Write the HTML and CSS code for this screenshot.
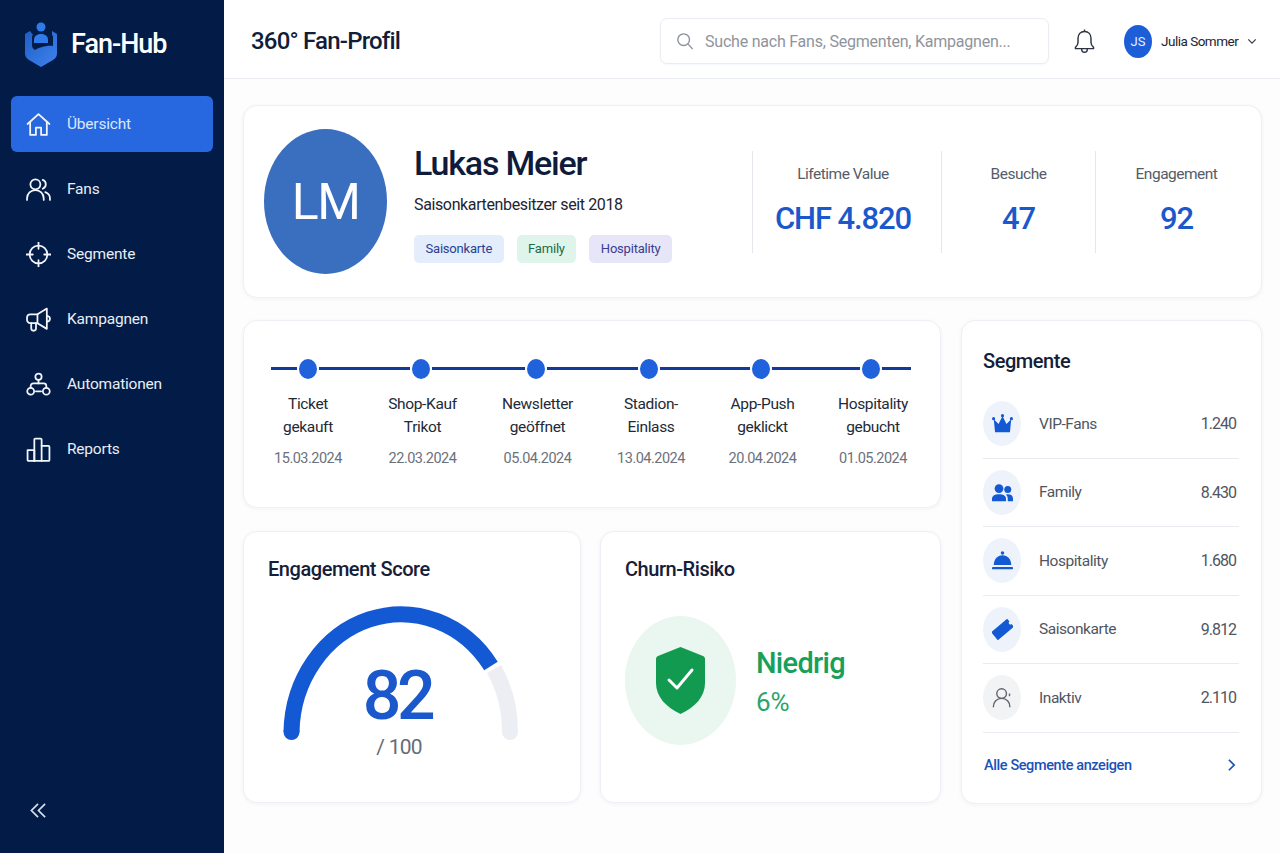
FILE: index.html
```html
<!DOCTYPE html>
<html lang="de">
<head>
  <meta charset="UTF-8" />
  <meta name="viewport" content="width=device-width, initial-scale=1.0"/>
  <title>Fan-Hub: 360° Fan-Profil</title>
  <link rel="stylesheet" href="styles.css">
</head>
<body>

<div class="app">

  <!-- Sidebar -->
  <aside class="sidebar">
    <div class="brand">
      <svg class="brand-logo" viewBox="0 0 34 46">
        <defs>
          <linearGradient id="shieldGrad" x1="0" y1="0" x2="1" y2="1">
            <stop offset="0" stop-color="#1f5fc4"/>
            <stop offset="1" stop-color="#3f83f0"/>
          </linearGradient>
        </defs>
        <path d="M6 9 1 12v19c0 3 1 5 4 7l12 7 12-7c3-2 4-4 4-7V12l-5-3v4l1 1v10c-6-1-15 2-18 4-2-1-3-3-3-5V14l1-1z" fill="url(#shieldGrad)"/>
        <circle cx="17" cy="5" r="4.500" fill="#2f7bea"/>
        <path d="M10 21v-3c0-3.500 2.500-6 7-6s7 2.500 7 6v3z" fill="#2f7bea"/>
      </svg>
      <span class="brand-name">Fan-Hub</span>
    </div>

    <nav class="nav">
      <a class="nav-item active">
        <svg class="nav-icon" viewBox="0 0 24 24"><path d="M1.500 11.500 12 2l10.500 9.500"/><path d="M4 9.500V22h5.500v-7h5v7H20V9.500"/></svg>
        Übersicht
      </a>
      <a class="nav-item">
        <svg class="nav-icon" viewBox="0 0 24 24"><circle cx="9" cy="7" r="4.800"/><path d="M1 22v-1.500a8 8 0 0 1 16 0V22"/><path d="M16 2.800a4.500 4.500 0 0 1 0 8.500"/><path d="M18.500 14.500c2.700 1 4.500 3.300 4.500 6V22"/></svg>
        Fans
      </a>
      <a class="nav-item">
        <svg class="nav-icon" viewBox="0 0 24 24"><circle cx="12" cy="12" r="8.500"/><path d="M12 0v6.500M12 17.500V24M0 12h6.500M17.500 12H24"/></svg>
        Segmente
      </a>
      <a class="nav-item">
        <svg class="nav-icon" viewBox="0 0 24 24"><path d="M20 1.500 11 7H4a3 3 0 0 0-3 3v2.500a3 3 0 0 0 3 3h7l9 5.500z"/><path d="M11 7v8.500"/><path d="M5 15.500v5a2.300 2.300 0 0 0 4.600 0v-5"/><path d="M20 8.500c2 .2 3 1.300 3 2.800s-1 2.700-3 2.800"/></svg>
        Kampagnen
      </a>
      <a class="nav-item">
        <svg class="nav-icon" viewBox="0 0 24 24"><circle cx="12" cy="4.500" r="3"/><path d="M12 7.500V11"/><path d="M4.500 15v-1.500a2.500 2.500 0 0 1 2.500-2.500h10a2.500 2.500 0 0 1 2.500 2.500V15"/><circle cx="4.500" cy="18.500" r="3.300"/><circle cx="19.500" cy="18.500" r="3.300"/><path d="M9.500 18.500h5"/></svg>
        Automationen
      </a>
      <a class="nav-item">
        <svg class="nav-icon" viewBox="0 0 24 24"><path d="M1.500 12.500h6.500V23H2.500a1 1 0 0 1-1-1z"/><path d="M8 23V2.500a1 1 0 0 1 1-1h5a1 1 0 0 1 1 1V23"/><path d="M15 8.500h6.500a1 1 0 0 1 1 1V22a1 1 0 0 1-1 1H8"/></svg>
        Reports
      </a>
    </nav>

    <div class="collapse">
      <svg viewBox="0 0 18 18"><path d="M8.500 2 1.500 9l7 7M16 2 9 9l7 7"/></svg>
    </div>
  </aside>

  <div class="main">

    <!-- Kopfzeile -->
    <header class="topbar">
      <div class="page-title">360° Fan-Profil</div>
      <div class="search">
        <svg class="search-icon" viewBox="0 0 20 20"><circle cx="8.500" cy="8.500" r="6.500"/><path d="m13.500 13.500 5 5.500"/></svg>
        <span class="search-text">Suche nach Fans, Segmenten, Kampagnen...</span>
      </div>
      <svg class="bell" viewBox="0 0 22 26"><path d="M11 3c-4.300 0-6.800 3-6.800 7.200v4.300c0 2.200-1 3.600-2.700 5.200v1.300h19v-1.300c-1.700-1.600-2.700-3-2.700-5.200v-4.300C17.800 6 15.300 3 11 3z"/><path d="M11 1v2M8 21c0 2.500 1.300 3.800 3 3.800s3-1.300 3-3.800"/></svg>
      <div class="user">
        <div class="user-avatar">JS</div>
        <span class="user-name">Julia Sommer</span>
        <svg class="user-caret" viewBox="0 0 12 8"><path d="m1.500 1.500 4.500 4.500 4.500-4.500"/></svg>
      </div>
    </header>

    <div class="content">

      <!-- Profilkarte -->
      <section class="card profile">
        <div class="profile-avatar">LM</div>
        <div class="profile-info">
          <h1 class="profile-name">Lukas Meier</h1>
          <p class="profile-since">Saisonkartenbesitzer seit 2018</p>
          <div class="tags">
            <span class="tag tag-blue">Saisonkarte</span>
            <span class="tag tag-green">Family</span>
            <span class="tag tag-purple">Hospitality</span>
          </div>
        </div>
        <div class="stats">
          <div class="stat">
            <div class="stat-label">Lifetime Value</div>
            <div class="stat-value">CHF 4.820</div>
          </div>
          <div class="stat">
            <div class="stat-label">Besuche</div>
            <div class="stat-value">47</div>
          </div>
          <div class="stat">
            <div class="stat-label">Engagement</div>
            <div class="stat-value">92</div>
          </div>
        </div>
      </section>

      <div class="columns">
        <div class="left-col">

          <!-- Timeline -->
          <section class="card timeline">
            <div class="step">
              <span class="dot"></span>
              <div class="step-title">Ticket<br>gekauft</div>
              <div class="step-date">15.03.2024</div>
            </div>
            <div class="step">
              <span class="dot"></span>
              <div class="step-title">Shop-Kauf<br>Trikot</div>
              <div class="step-date">22.03.2024</div>
            </div>
            <div class="step">
              <span class="dot"></span>
              <div class="step-title">Newsletter<br>geöffnet</div>
              <div class="step-date">05.04.2024</div>
            </div>
            <div class="step">
              <span class="dot"></span>
              <div class="step-title">Stadion-<br>Einlass</div>
              <div class="step-date">13.04.2024</div>
            </div>
            <div class="step">
              <span class="dot"></span>
              <div class="step-title">App-Push<br>geklickt</div>
              <div class="step-date">20.04.2024</div>
            </div>
            <div class="step">
              <span class="dot"></span>
              <div class="step-title">Hospitality<br>gebucht</div>
              <div class="step-date">01.05.2024</div>
            </div>
          </section>

          <div class="bottom-row">
            <section class="card score">
              <h2 class="card-title">Engagement Score</h2>
              <div class="gauge">
                <svg class="gauge-arc" viewBox="0 0 236 136">
                  <path class="arc-rest" d="M211 65 A109.500 120 0 0 1 227 128"/>
                  <circle class="arc-rest-cap" cx="227" cy="128" r="8"/>
                  <path class="arc-fill" d="M8.500 128 A109.500 120 0 0 1 208 62"/>
                  <circle class="arc-fill-cap" cx="8.500" cy="128" r="8"/>
                </svg>
                <div class="gauge-value">82</div>
                <div class="gauge-max">/ 100</div>
              </div>
            </section>

            <section class="card churn">
              <h2 class="card-title">Churn-Risiko</h2>
              <div class="churn-body">
                <div class="churn-badge">
                  <svg viewBox="0 0 49 67"><path class="shield" d="M24.500 0 47 9c1.200.5 2 1.500 2 3v24c0 14-10 24-24.500 31C10 60 0 50 0 36V12c0-1.500.8-2.500 2-3z"/><path class="shield-check" d="m13 33 8 8 15-18"/></svg>
                </div>
                <div>
                  <div class="churn-level">Niedrig</div>
                  <div class="churn-pct">6%</div>
                </div>
              </div>
            </section>
          </div>
        </div>

        <!-- Segmente -->
        <section class="card segments">
          <h2 class="card-title">Segmente</h2>
          <div class="segment">
            <div class="segment-icon">
              <svg viewBox="0 0 24 24"><circle cx="12" cy="3" r="1.800"/><circle cx="1.800" cy="6.500" r="1.800"/><circle cx="22.200" cy="6.500" r="1.800"/><path d="M2 7 7.500 12.500 12 3.500 16.500 12.500 22 7 20.500 22H3.500z"/></svg>
            </div>
            <span class="segment-name">VIP-Fans</span>
            <span class="segment-count">1.240</span>
          </div>
          <div class="segment">
            <div class="segment-icon">
              <svg viewBox="0 0 24 24"><circle cx="8" cy="7.500" r="5"/><circle cx="18" cy="8.500" r="4"/><path d="M0 22v-2.500C0 15.500 3.500 14 8 14s8 1.500 8 5.500V22z"/><path d="M18 22v-3c0-2-.8-3.500-2-4.800.7-.1 1.500-.2 2.200-.2 3.500 0 5.800 1.500 5.800 5v3z"/></svg>
            </div>
            <span class="segment-name">Family</span>
            <span class="segment-count">8.430</span>
          </div>
          <div class="segment">
            <div class="segment-icon">
              <svg viewBox="0 0 24 24"><circle cx="12" cy="3.500" r="2"/><path d="M2 17c0-6 4-11 10-11s10 5 10 11z"/><rect x="0" y="19.500" width="24" height="2.500" rx="1"/></svg>
            </div>
            <span class="segment-name">Hospitality</span>
            <span class="segment-count">1.680</span>
          </div>
          <div class="segment">
            <div class="segment-icon">
              <svg viewBox="0 0 24 24"><path transform="rotate(-40 12 12)" d="M0 6h24v4a2 2 0 0 0 0 4v4H0z"/></svg>
            </div>
            <span class="segment-name">Saisonkarte</span>
            <span class="segment-count">9.812</span>
          </div>
          <div class="segment">
            <div class="segment-icon inactive">
              <svg viewBox="0 0 24 24"><circle cx="11" cy="7.500" r="5.500"/><path d="M1.500 23c0-6 4-10 9.500-10s9.500 4 9.500 10"/><path d="M20 7.500v3"/></svg>
            </div>
            <span class="segment-name">Inaktiv</span>
            <span class="segment-count">2.110</span>
          </div>
          <a class="segments-link">
            Alle Segmente anzeigen
            <svg viewBox="0 0 10 16"><path d="m2 2 6 6-6 6"/></svg>
          </a>
        </section>
      </div>
    </div>
  </div>
</div>

</body>
</html>
```

FILE: styles.css
```css
* {
  box-sizing: border-box;
}
body {
  margin: 0;
  font-family: 'Roboto', 'Liberation Sans', sans-serif;
  background: #fdfdfe;
  color: #111d3a;
}
h1, h2, p {
  margin: 0;
}
.app {
  display: flex;
  width: 1280px;
  height: 853px;
  overflow: hidden;
}

/* sidebar */
.sidebar {
  display: flex;
  flex-direction: column;
  flex: none;
  width: 224px;
  padding: 22px 11px 34px;
  background: #021c47;
  color: #fff;
}
.brand {
  display: flex;
  align-items: center;
  gap: 13px;
  height: 45px;
  padding-left: 13px;
}
.brand-logo {
  width: 34px;
  height: 46px;
}
.brand-name {
  margin-bottom: 2px;
  font-size: 27px;
  font-weight: 500;
  letter-spacing: -1px;
}
.nav {
  display: flex;
  flex-direction: column;
  gap: 9px;
  margin-top: 29px;
  width: 202px;
}
.nav-item {
  display: flex;
  align-items: center;
  gap: 16px;
  height: 56px;
  padding-left: 15px;
  border-radius: 6px;
  font-size: 15.500px;
  letter-spacing: -0.2px;
  color: #e9edf4;
}
.nav-item.active {
  background: #2767e0;
  color: #dbe7fd;
}
.nav-icon {
  width: 25px;
  height: 25px;
  fill: none;
  stroke: #f2f5fa;
  stroke-width: 1.700;
  stroke-linecap: round;
  stroke-linejoin: round;
}
.collapse {
  margin-top: auto;
  padding-left: 19px;
  line-height: 0;
}
.collapse svg {
  width: 17px;
  height: 17px;
  fill: none;
  stroke: #d9dfe9;
  stroke-width: 1.800;
}

/* kopfzeile */
.main {
  flex: 1;
  min-width: 0;
}
.topbar {
  display: flex;
  align-items: center;
  height: 79px;
  padding: 4px 0 0 27px;
  border-bottom: 1px solid #e9ecf1;
  background: #fff;
}
.page-title {
  width: 409px;
  font-size: 24px;
  font-weight: 500;
  letter-spacing: -0.8px;
}
.search {
  display: flex;
  align-items: center;
  gap: 11px;
  flex: none;
  width: 389px;
  height: 46px;
  padding-left: 15px;
  border: 1px solid #e9ecf1;
  border-radius: 7px;
  box-shadow: 0 1px 2px rgba(20, 40, 80, 0.04);
}
.search-icon {
  width: 18px;
  height: 20px;
  fill: none;
  stroke: #8b9099;
  stroke-width: 1.500;
}
.search-text {
  font-size: 16px;
  letter-spacing: -0.22px;
  color: #8f949c;
}
.bell {
  flex: none;
  width: 21px;
  height: 26px;
  margin-left: 25px;
  fill: none;
  stroke: #2d3340;
  stroke-width: 1.500;
  stroke-linejoin: round;
}
.user {
  display: flex;
  align-items: center;
  margin-left: 29px;
}
.user-avatar {
  display: flex;
  align-items: center;
  justify-content: center;
  flex: none;
  width: 28px;
  height: 33px;
  border-radius: 50%;
  background: #1c5ed8;
  color: #e8effc;
  font-size: 13px;
}
.user-name {
  margin-left: 9px;
  font-size: 13.500px;
  letter-spacing: -0.5px;
  white-space: nowrap;
  color: #1d2433;
}
.user-caret {
  flex: none;
  width: 10px;
  height: 7px;
  margin-left: 9px;
  fill: none;
  stroke: #39404d;
  stroke-width: 1.500;
}

/* karten */
.content {
  padding: 26px 18px 0 19px;
}
.card {
  background: #fff;
  border: 1px solid #edf0f4;
  border-radius: 14px;
  box-shadow: 0 1px 4px rgba(20, 40, 80, 0.05);
}
.card-title {
  font-size: 20px;
  font-weight: 500;
  letter-spacing: -0.45px;
  color: #152038;
}

/* profil */
.profile {
  display: flex;
  align-items: center;
  height: 193px;
  padding-left: 20px;
}
.profile-avatar {
  display: flex;
  align-items: center;
  justify-content: center;
  flex: none;
  width: 123px;
  height: 145px;
  border-radius: 50%;
  background: #3a6ebf;
  color: #fff;
  font-size: 50px;
  letter-spacing: -1.500px;
}
.profile-info {
  margin-left: 27px;
}
.profile-name {
  margin-top: 3px;
  font-size: 34px;
  font-weight: 500;
  line-height: 40px;
  letter-spacing: -1.200px;
  color: #0f1b3a;
}
.profile-since {
  margin-top: 12px;
  font-size: 16px;
  letter-spacing: -0.37px;
  color: #1d2433;
}
.tags {
  display: flex;
  gap: 13px;
  margin-top: 21px;
}
.tag {
  padding: 0 11.500px;
  height: 28px;
  line-height: 28px;
  border-radius: 5px;
  font-size: 13px;
  letter-spacing: -0.2px;
}
.tag-blue {
  background: #e3edfb;
  color: #2b3f8f;
}
.tag-green {
  background: #dff4ea;
  color: #1f6b47;
}
.tag-purple {
  background: #e7e6f8;
  color: #38408f;
}
.stats {
  display: grid;
  grid-template-columns: 189px 154px 162px;
  margin-left: auto;
  margin-right: 4px;
}
.stat {
  height: 102px;
  padding-top: 14px;
  border-left: 1px solid #e4e7ec;
  text-align: center;
}
.stat:first-child {
  padding-right: 8px;
}
.stat-label {
  font-size: 15.500px;
  letter-spacing: -0.5px;
  color: #555c68;
}
.stat-value {
  margin-top: 17px;
  font-size: 31px;
  font-weight: 500;
  letter-spacing: -1.100px;
  color: #1a58cc;
}

/* spalten */
.columns {
  display: grid;
  grid-template-columns: 698px 301px;
  gap: 20px;
  margin-top: 22px;
}
.left-col {
  display: flex;
  flex-direction: column;
  gap: 23px;
}

/* timeline */
.timeline {
  position: relative;
  display: grid;
  grid-template-columns: 114px 115px 115px 112px 111px 110px;
  height: 188px;
  padding: 36px 0 0 7px;
}
.timeline::before {
  content: '';
  position: absolute;
  left: 27px;
  right: 29px;
  top: 46px;
  height: 3px;
  background: #123a9c;
}
.step {
  position: relative;
  text-align: center;
}
.dot {
  display: block;
  width: 22px;
  height: 24px;
  margin: 0 0 12px calc(50% - 13px);
  border: 2px solid #fff;
  border-radius: 50%;
  background: #1f62dc;
}
.step:first-child .dot {
  margin-left: calc(50% - 11px);
}
.step-title {
  font-size: 15.500px;
  line-height: 22.500px;
  letter-spacing: -0.35px;
  color: #232a37;
}
.step-date {
  margin-top: 12px;
  font-size: 14.500px;
  letter-spacing: -0.5px;
  color: #6b717c;
}

/* score + churn */
.bottom-row {
  display: grid;
  grid-template-columns: 338px 341px;
  gap: 19px;
  height: 272px;
}
.score, .churn {
  padding: 25px 0 0 24px;
}
.gauge {
  position: relative;
  width: 236px;
  height: 160px;
  margin: 23px 0 0 15px;
}
.gauge-arc {
  display: block;
  width: 236px;
  height: 136px;
}
.arc-rest {
  fill: none;
  stroke: #eceef3;
  stroke-width: 16;
}
.arc-rest-cap {
  fill: #eceef3;
}
.arc-fill {
  fill: none;
  stroke: #1459d4;
  stroke-width: 16;
}
.arc-fill-cap {
  fill: #1459d4;
}
.gauge-value {
  position: absolute;
  left: 0;
  right: 8px;
  top: 49px;
  text-align: center;
  font-size: 68px;
  font-weight: 500;
  line-height: 86px;
  letter-spacing: -4.500px;
  color: #1a58cc;
}
.gauge-max {
  position: absolute;
  left: 0;
  right: 4px;
  top: 131px;
  text-align: center;
  font-size: 21px;
  letter-spacing: -0.8px;
  color: #666c77;
}
.churn-body {
  display: flex;
  align-items: center;
  gap: 20px;
  margin-top: 35px;
}
.churn-badge {
  display: flex;
  align-items: center;
  justify-content: center;
  width: 111px;
  height: 129px;
  border-radius: 50%;
  background: #e9f7f0;
}
.churn-badge svg {
  width: 49px;
  height: 67px;
}
.shield {
  fill: #129a50;
}
.shield-check {
  fill: none;
  stroke: #fff;
  stroke-width: 3;
  stroke-linecap: round;
  stroke-linejoin: round;
}
.churn-level {
  margin-top: 1px;
  font-size: 29px;
  font-weight: 500;
  letter-spacing: -0.7px;
  color: #17a05a;
}
.churn-pct {
  margin-top: 7px;
  font-size: 26px;
  color: #2ca668;
}

/* segmente */
.segments {
  height: 484px;
  padding: 28px 21px 0 21px;
}
.segment {
  display: flex;
  align-items: center;
  width: 256px;
  height: 68.500px;
  border-bottom: 1px solid #e8ebf0;
}
.segments .card-title + .segment {
  margin-top: 17px;
}
.segment-icon {
  display: flex;
  align-items: center;
  justify-content: center;
  flex: none;
  width: 38px;
  height: 45px;
  border-radius: 50%;
  background: #eef3fb;
}
.segment-icon svg {
  width: 21px;
  height: 21px;
  fill: #1459d4;
}
.segment-icon.inactive {
  background: #f2f3f5;
}
.segment-icon.inactive svg {
  fill: none;
  stroke: #5d646f;
  stroke-width: 1.600;
}
.segment-name {
  margin-left: 18px;
  font-size: 15.500px;
  letter-spacing: -0.45px;
  color: #50565f;
}
.segment-count {
  margin-left: auto;
  margin-right: 3px;
  font-size: 16px;
  letter-spacing: -1px;
  color: #50565f;
}
.segments-link {
  display: flex;
  align-items: center;
  justify-content: space-between;
  width: 252px;
  margin: 24px 0 0 1px;
  font-size: 14.500px;
  font-weight: 500;
  letter-spacing: -0.4px;
  color: #1c52b8;
}
.segments-link svg {
  width: 9px;
  height: 14px;
  fill: none;
  stroke: #1c52b8;
  stroke-width: 2;
}
```
